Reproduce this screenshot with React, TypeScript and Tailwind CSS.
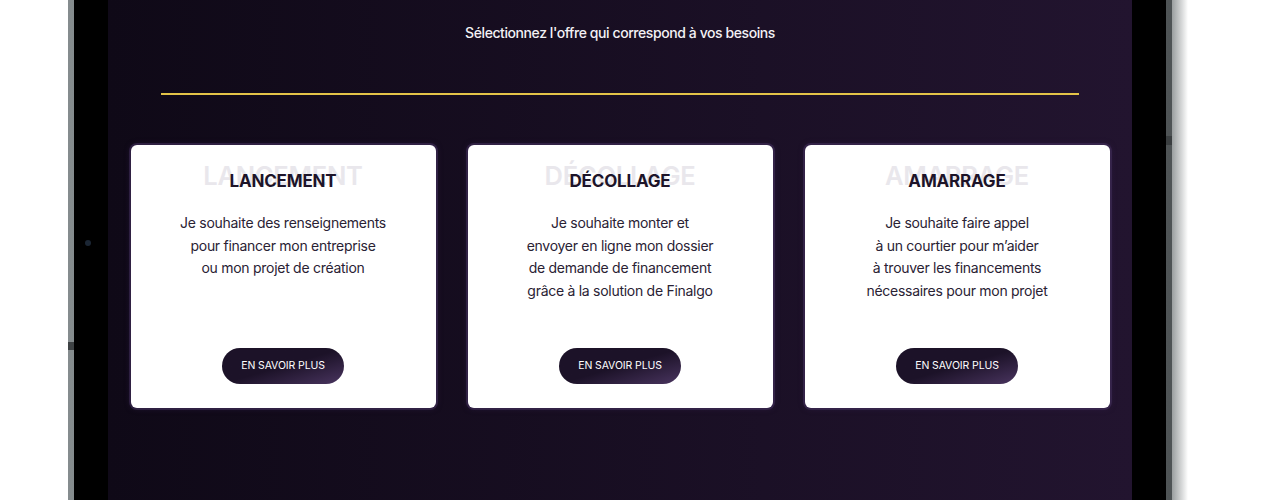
import React from 'react'

const offers = [
  {
    title: 'LANCEMENT',
    lines: ['Je souhaite des renseignements', 'pour financer mon entreprise', 'ou mon projet de création'],
  },
  {
    title: 'DÉCOLLAGE',
    lines: ['Je souhaite monter et', 'envoyer en ligne mon dossier', 'de demande de financement', 'grâce à la solution de Finalgo'],
  },
  {
    title: 'AMARRAGE',
    lines: ['Je souhaite faire appel', 'à un courtier pour m’aider', 'à trouver les financements', 'nécessaires pour mon projet'],
  },
]

function OfferCard({ title, lines }: { title: string; lines: string[] }) {
  return (
    <div className="flex h-[263px] flex-col items-center rounded-[6px] bg-white pt-[22px] pb-[24px] shadow-[0_0_0_2px_rgba(70,50,95,0.5),0_0_6px_rgba(60,40,90,0.5)]">
      <div className="relative flex h-[28px] items-center justify-center">
        <span className="absolute top-1/2 left-1/2 -translate-x-1/2 -translate-y-[62%] text-[25.5px] font-semibold tracking-[-0.01em] whitespace-nowrap text-[#e9e7ec]">
          {title}
        </span>
        <h3 className="relative text-[17px] leading-[28px] font-bold tracking-[-0.01em] text-[#1d1429]">{title}</h3>
      </div>
      <p className="mt-[17px] text-center text-[14px] leading-[22.7px] tracking-[-0.02em] text-[#2a2234]">
        {lines.map((l) => (
          <span key={l} className="block">
            {l}
          </span>
        ))}
      </p>
      <button className="mt-auto h-[36px] w-[122px] rounded-full bg-gradient-to-br from-[#1c1228] from-50% to-[#4a3560] text-[10.5px] font-normal tracking-[-0.01em] text-white">
        EN SAVOIR PLUS
      </button>
    </div>
  )
}

export default function App() {
  return (
    <div className="flex h-[500px] w-[1280px] overflow-hidden bg-white font-['Inter',sans-serif]">
      <div className="relative ml-[68px] flex h-full w-[1104px] bg-gradient-to-r from-[#858c8e] via-[#6a7072] to-[#4e5355] px-[6px]">
        <div className="absolute top-[342px] left-0 h-[8px] w-[6px] bg-[#3e4244]" />
        <div className="absolute top-[136px] right-0 h-[9px] w-[6px] bg-[#3a3e40]" />
        <div className="relative flex h-full flex-1 bg-black px-[34px]">
          <div className="absolute top-[240px] left-[11px] h-[6px] w-[6px] rounded-full bg-[#1b2634]" />
          <div className="flex h-full flex-1 flex-col bg-gradient-to-r from-[#0f0917] to-[#22142f]">
            <p className="pt-[23px] text-center text-[14px] leading-[20px] font-medium tracking-[-0.03em] text-[#f3f1f5]">
              Sélectionnez l'offre qui correspond à vos besoins
            </p>
            <div className="mx-auto mt-[50px] h-[2px] w-[918px] bg-[#e3c348]" />
            <div className="mx-auto mt-[50px] grid w-[979px] grid-cols-3 gap-[32px]">
              {offers.map((o) => (
                <OfferCard key={o.title} {...o} />
              ))}
            </div>
          </div>
        </div>
      </div>
      <div className="h-full w-[16px] bg-gradient-to-r from-[#9a9e9f] to-white" />
    </div>
  )
}
